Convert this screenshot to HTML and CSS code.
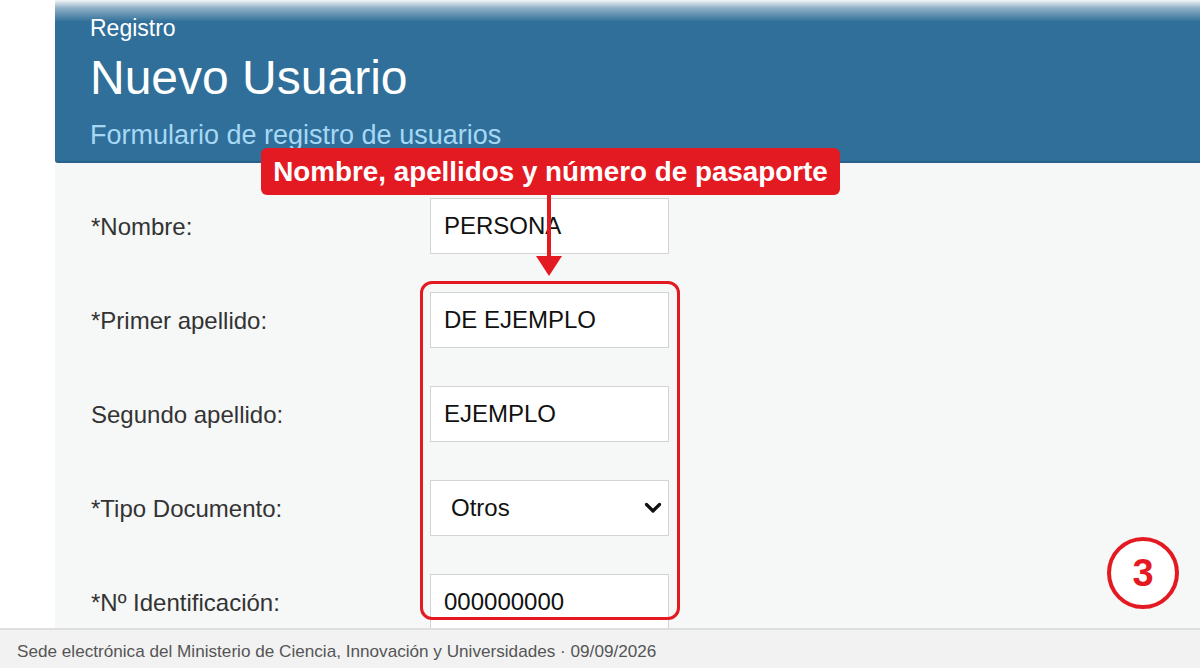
FILE: index.html
```html
<!DOCTYPE html>
<html lang="es">
<head>
<meta charset="utf-8">
<title>Nuevo Usuario</title>
<link rel="stylesheet" href="styles.css">
</head>
<body>
<div class="page">
  <main class="main">
    <section class="panel">
      <header class="head">
        <div class="crumb">Registro</div>
        <h1 class="title">Nuevo Usuario</h1>
        <div class="subtitle">Formulario de registro de usuarios</div>
      </header>
      <form class="form">
        <div class="row">
          <label class="lbl">*Nombre:</label>
          <div class="field">PERSONA</div>
        </div>
        <div class="row">
          <label class="lbl">*Primer apellido:</label>
          <div class="field">DE EJEMPLO</div>
        </div>
        <div class="row">
          <label class="lbl">Segundo apellido:</label>
          <div class="field">EJEMPLO</div>
        </div>
        <div class="row">
          <label class="lbl">*Tipo Documento:</label>
          <div class="field select"><span class="sel-text">Otros</span>
            <svg class="chev" width="18" height="12" viewBox="0 0 18 12"><path d="M2.5 2.5 L9 9 L15.5 2.5" fill="none" stroke="#111" stroke-width="3.2" stroke-linecap="round" stroke-linejoin="round"/></svg>
          </div>
        </div>
        <div class="row">
          <label class="lbl">*Nº Identificación:</label>
          <div class="field">000000000</div>
        </div>
      </form>
      <div class="callout">Nombre, apellidos y número de pasaporte</div>
      <div class="arrow-line"></div>
      <div class="arrow-head"></div>
      <div class="highlight"></div>
      <div class="step">3</div>
    </section>
  </main>
  <footer class="foot">Sede electrónica del Ministerio de Ciencia, Innovación y Universidades · 09/09/2026</footer>
</div>
</body>
</html>
```
FILE: styles.css
```css
* { box-sizing: border-box; }
html, body { margin: 0; padding: 0; }
body {
  background: #ffffff;
  font-family: "Liberation Sans", Arial, Helvetica, sans-serif;
}
.page {
  height: 668px;
  display: flex;
  flex-direction: column;
  overflow: hidden;
}
.main {
  flex: 1;
  overflow: hidden;
  padding-left: 55px;
}
.panel {
  position: relative;
  background: #f6f7f7;
  min-height: 100%;
}
.head {
  height: 163px;
  background: linear-gradient(to bottom, #f4f6f8 0px, #8fb0c6 8px, #2f6f99 22px, #2f6f99 100%);
  border-bottom: 2px solid #29618a;
  border-bottom-left-radius: 3px;
  padding: 15px 0 0 35px;
  color: #ffffff;
}
.crumb {
  font-size: 23px;
  line-height: 26px;
}
.title {
  margin: 9px 0 0 0;
  font-weight: normal;
  font-size: 48px;
  line-height: 56px;
}
.subtitle {
  margin-top: 13px;
  font-size: 27px;
  line-height: 32px;
  color: #a6d8f6;
}
.form {
  padding: 35px 0 0 36px;
  display: flex;
  flex-direction: column;
  gap: 39px;
}
.row {
  display: flex;
  align-items: center;
  height: 55px;
}
.lbl {
  width: 339px;
  font-size: 24px;
  color: #333333;
  padding-top: 3px;
}
.field {
  width: 239px;
  height: 56px;
  background: #ffffff;
  border: 1px solid #d3d3d3;
  display: flex;
  align-items: center;
  padding-left: 13px;
  font-size: 24px;
  color: #111111;
}
.field.select {
  padding-left: 20px;
  justify-content: space-between;
  padding-right: 6px;
}
.chev { display: block; }
.callout {
  position: absolute;
  left: 206px;
  top: 148px;
  width: 579px;
  height: 47px;
  background: #e41a22;
  border-radius: 6px;
  color: #ffffff;
  font-weight: bold;
  font-size: 27.8px;
  line-height: 47px;
  text-align: center;
  white-space: nowrap;
}
.arrow-line {
  position: absolute;
  left: 492px;
  top: 194px;
  width: 4px;
  height: 66px;
  background: #e41a22;
}
.arrow-head {
  position: absolute;
  left: 481px;
  top: 256px;
  width: 0;
  height: 0;
  border-left: 13px solid transparent;
  border-right: 13px solid transparent;
  border-top: 20px solid #e41a22;
}
.highlight {
  position: absolute;
  left: 365px;
  top: 281px;
  width: 260px;
  height: 339px;
  border: 3px solid #e41a22;
  border-radius: 12px;
}
.step {
  position: absolute;
  left: 1052px;
  top: 537px;
  width: 72px;
  height: 72px;
  border: 4px solid #e41a22;
  border-radius: 50%;
  background: #ffffff;
  color: #e41a22;
  font-weight: bold;
  font-size: 38px;
  line-height: 64px;
  text-align: center;
}
.foot {
  flex: 0 0 40px;
  background: #f2f2f2;
  border-top: 2px solid #dedede;
  padding: 4px 0 0 17px;
  font-size: 17.15px;
  line-height: 34px;
  color: #555555;
  white-space: nowrap;
}
```
